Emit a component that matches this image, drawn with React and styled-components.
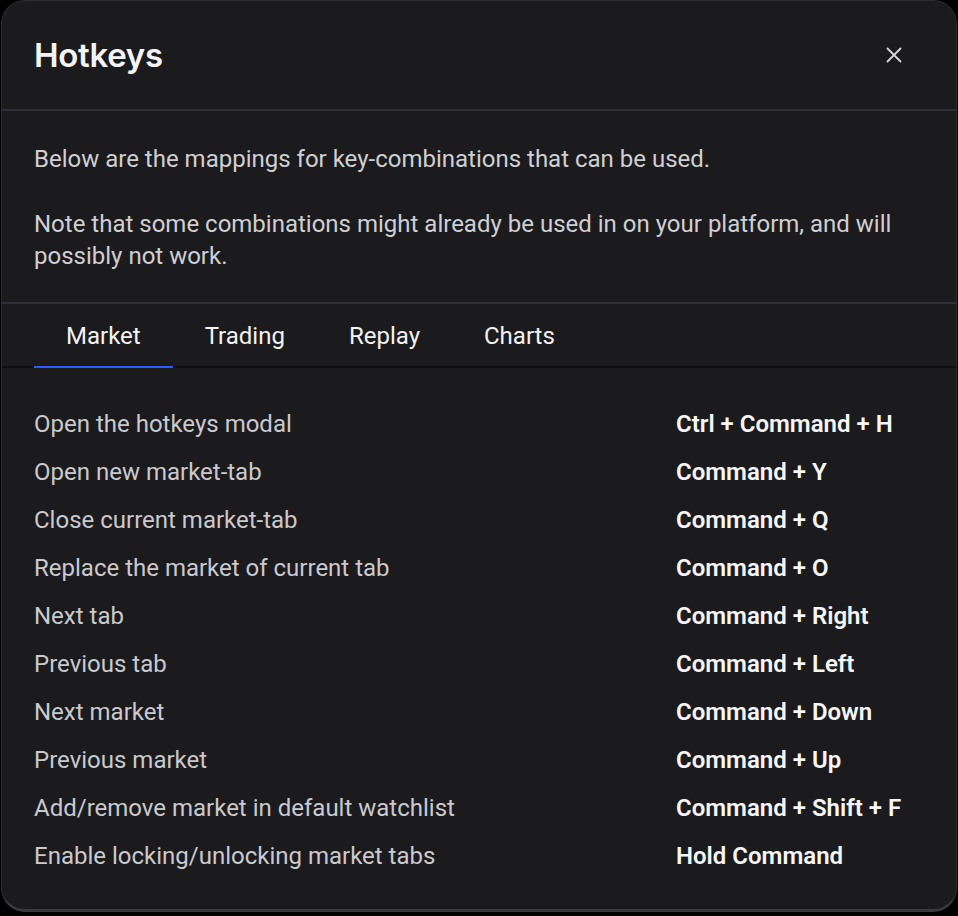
import React, { useState } from 'react';
import styled, { createGlobalStyle } from 'styled-components';

const GlobalStyle = createGlobalStyle`
  html, body {
    margin: 0;
    padding: 0;
    background: #000000;
  }
  body {
    font-family: Roboto, "Liberation Sans", sans-serif;
    -webkit-font-smoothing: antialiased;
  }
`;

const Modal = styled.div`
  box-sizing: border-box;
  width: 956px;
  height: 912px;
  margin-left: 1px;
  background: #1b1b1e;
  border: 1px solid #2c2c31;
  border-bottom: 3px solid #38383e;
  border-radius: 24px;
  overflow: hidden;
  display: flex;
  flex-direction: column;
`;

const Header = styled.div`
  height: 108px;
  display: flex;
  align-items: center;
  justify-content: space-between;
  padding: 0 54px 0 32px;
  border-bottom: 2px solid #2f2f35;
`;

const Title = styled.h2`
  margin: 0;
  font-family: Inter, "Noto Sans", sans-serif;
  font-size: 33px;
  font-weight: 600;
  color: #f4f4f6;
  letter-spacing: -0.3px;
`;

const CloseButton = styled.button`
  background: none;
  border: none;
  padding: 0;
  width: 16px;
  height: 16px;
  display: flex;
  align-items: center;
  justify-content: center;
  color: #d6d6da;
  cursor: pointer;
`;

const Description = styled.div`
  padding: 32px 32px 30px;
  border-bottom: 2px solid #2f2f35;
`;

const Paragraph = styled.p`
  margin: 0;
  font-size: 24px;
  line-height: 32px;
  color: #cfcfd3;

  & + & {
    margin-top: 33px;
  }
`;

const TabBar = styled.div`
  display: flex;
  padding: 0 32px;
  border-bottom: 2px solid #0e0e10;
`;

const Tab = styled.button`
  background: none;
  border: none;
  margin: 0 0 -2px;
  padding: 0 32px;
  height: 64px;
  font-family: Roboto, "Liberation Sans", sans-serif;
  font-size: 24px;
  font-weight: 400;
  color: #f2f2f4;
  cursor: pointer;
  box-shadow: ${({ $active }) => ($active ? 'inset 0 -2px 0 #2a5bff' : 'none')};
`;

const List = styled.div`
  padding: 32px 32px 0;
  display: flex;
  flex-direction: column;
`;

const Row = styled.div`
  display: grid;
  grid-template-columns: 642px 1fr;
  height: 48px;
  align-items: center;
  font-size: 24px;
`;

const Action = styled.span`
  color: #c9c9ce;
`;

const Keys = styled.span`
  color: #f6f6f8;
  font-weight: 600;
`;

const tabs = ['Market', 'Trading', 'Replay', 'Charts'];

const hotkeys = [
  ['Open the hotkeys modal', 'Ctrl + Command + H'],
  ['Open new market-tab', 'Command + Y'],
  ['Close current market-tab', 'Command + Q'],
  ['Replace the market of current tab', 'Command + O'],
  ['Next tab', 'Command + Right'],
  ['Previous tab', 'Command + Left'],
  ['Next market', 'Command + Down'],
  ['Previous market', 'Command + Up'],
  ['Add/remove market in default watchlist', 'Command + Shift + F'],
  ['Enable locking/unlocking market tabs', 'Hold Command'],
];

const App = () => {
  const [active, setActive] = useState('Market');
  return (
    <>
      <GlobalStyle />
      <Modal>
        <Header>
          <Title>Hotkeys</Title>
          <CloseButton aria-label="Close">
            <svg width="16" height="16" viewBox="0 0 16 16" fill="none">
              <path d="M1.5 1.5L14.5 14.5M14.5 1.5L1.5 14.5" stroke="currentColor" strokeWidth="1.8" strokeLinecap="round" />
            </svg>
          </CloseButton>
        </Header>
        <Description>
          <Paragraph>Below are the mappings for key-combinations that can be used.</Paragraph>
          <Paragraph>
            Note that some combinations might already be used in on your platform, and will possibly not work.
          </Paragraph>
        </Description>
        <TabBar>
          {tabs.map(t => (
            <Tab key={t} $active={t === active} onClick={() => setActive(t)}>
              {t}
            </Tab>
          ))}
        </TabBar>
        <List>
          {hotkeys.map(([action, keys]) => (
            <Row key={action}>
              <Action>{action}</Action>
              <Keys>{keys}</Keys>
            </Row>
          ))}
        </List>
      </Modal>
    </>
  );
};

export default App;
